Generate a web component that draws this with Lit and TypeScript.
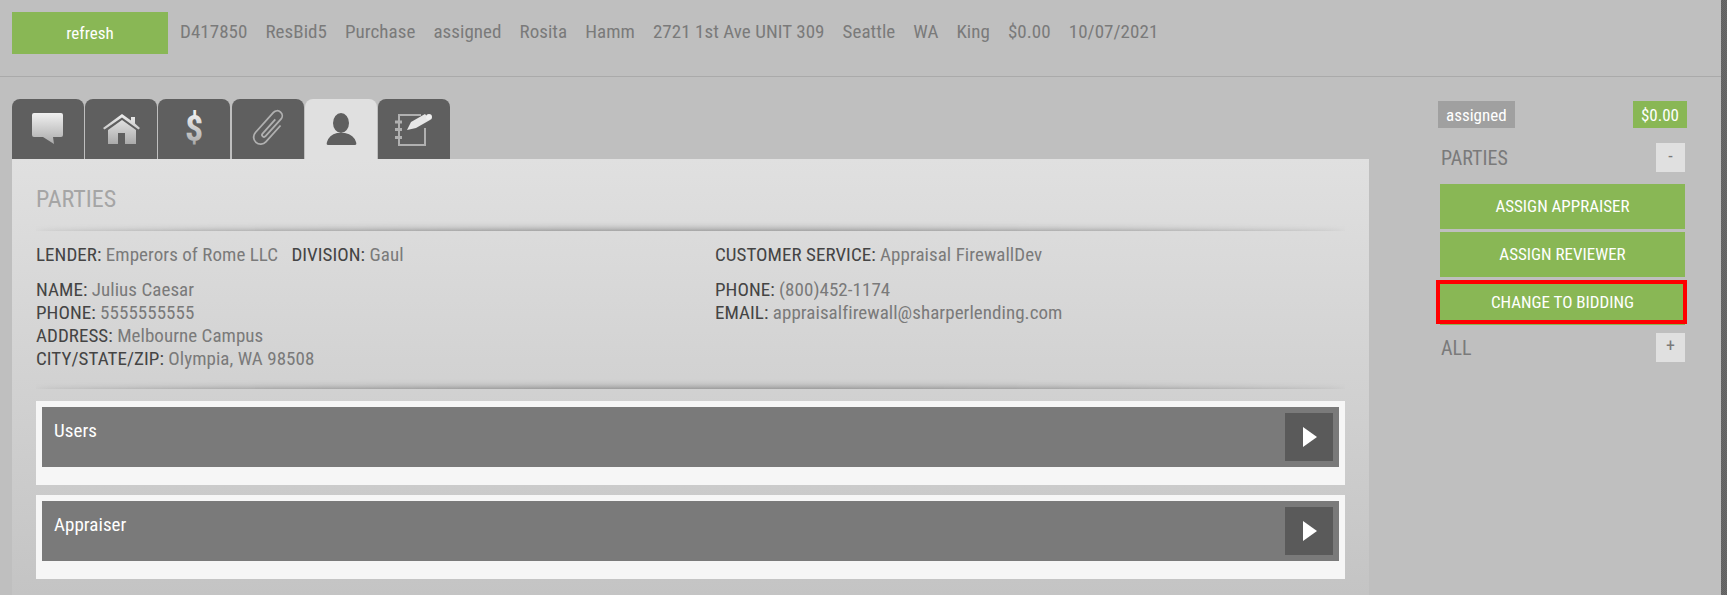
import { LitElement, html, css, svg } from 'lit';
import { customElement } from 'lit/decorators.js';

const tabIcons = [
  svg`<path d="M22 14h27q2 0 2 2v20q0 2-2 2h-8l1 7-11-7h-9q-2 0-2-2V16q0-2 2-2z" fill="url(#g)"/>`,
  svg`<path d="M18 29 37 15l9 6.500V18h4v6.500L55 29l-1.500 1.500L37 18.500 19.500 30.500z" fill="url(#g)"/><path d="M23 31 37 21l14 10v14H40V34h-7v11H23z" fill="url(#g)"/>`,
  svg`<text x="36" y="42" text-anchor="middle" font-family="Roboto Condensed, Roboto" font-stretch="condensed" font-weight="700" font-size="36" fill="url(#g)">$</text>`,
  svg`<path transform="rotate(42 36 30)" d="M43 19V41a7 7 0 0 1-14 0V14a5 5 0 0 1 10 0V37a2 2 0 0 1-4 0V18" fill="none" stroke="#b0b0b0" stroke-width="1.800"/>`,
  svg`<ellipse cx="36" cy="24" rx="8" ry="10" fill="#5f5f5f"/><path d="M23 46q-2 0-1-3 2-7 10-9h8q9 2 11 9 1 3-1 3z" fill="#5f5f5f"/>`,
  svg`<path d="M43 16H21v30h26V29" fill="none" stroke="#b0b0b0" stroke-width="2"/><path d="M17 21.500h7v3h-7zM17 29h7v3h-7zM17 37h7v3h-7z" fill="#b0b0b0"/><path d="M29 31l4-8 14-8 5 6-14 8z" fill="#e8e8e8"/><circle cx="51" cy="18" r="3" fill="#f0f0f0"/>`,
];

const topItems = ['D417850', 'ResBid5', 'Purchase', 'assigned', 'Rosita', 'Hamm', '2721 1st Ave UNIT 309', 'Seattle', 'WA', 'King', '$0.00', '10/07/2021'];

@customElement('app-root')
export default class AppRoot extends LitElement {
  static styles = css`
    :host {
      display: block;
      height: 595px;
      overflow: hidden;
      background: #bfbfbf;
      font-family: "Roboto Condensed", Roboto, "Liberation Sans", sans-serif;
      font-stretch: condensed;
      font-size: 19px;
      letter-spacing: 0.05px;
      color: #7a7a7a;
    }
    .page { display: flex; height: 595px; }
    .content { flex: 1; min-width: 0; }
    .strip { width: 6px; background: repeating-conic-gradient(#606060 0 25%, #6c6c6c 0 50%) 0 0 / 2px 2px; }
    .top {
      box-sizing: border-box;
      height: 77px;
      border-bottom: 1px solid #aaa;
      display: flex;
      gap: 18px;
      padding: 12px 0 0 12px;
      line-height: 40px;
    }
    .refresh {
      width: 156px;
      height: 42px;
      line-height: 42px;
      background: #89b755;
      color: #fff;
      text-align: center;
      font-size: 17px;
      letter-spacing: 0;
      margin-right: -6px;
    }
    .body { display: flex; }
    .main { width: 1357px; padding: 22px 0 0 12px; }
    .tabs { display: flex; gap: 1.2px; height: 60px; }
    .tab { width: 72px; height: 60px; border-radius: 8px 8px 0 0; background: #5f5f5f; }
    .tab.on { background: #e0e0e0; }
    .tab svg { display: block; width: 72px; height: 60px; }
    .panel {
      height: 436px;
      padding: 24px 24px 0;
      box-sizing: border-box;
      background: linear-gradient(#e0e0e0, #c4c4c4);
    }
    h2 { margin: 0; font-weight: 400; font-size: 24px; letter-spacing: 0; line-height: 32px; color: #a5a5a5; }
    .rule { position: relative; height: 16px; overflow: hidden; margin-bottom: 12px; }
    .rule.low { height: 19px; margin-bottom: 12px; }
    .rule::after {
      content: "";
      position: absolute;
      left: 0;
      right: 0;
      bottom: -12px;
      height: 12px;
      border-radius: 50%;
      box-shadow: 0 0 9px rgba(0, 0, 0, 0.5);
    }
    .cols { display: flex; line-height: 23px; }
    .col { flex: 0 0 679px; }
    .col p { margin: 0 0 12px; }
    .col p:last-child { margin: 0; }
    b { font-weight: 400; color: #444; }
    .acc { background: #f6f6f6; padding: 6px 6px 18px; margin-bottom: 10px; }
    .acc-in {
      height: 60px;
      background: #7a7a7a;
      display: flex;
      justify-content: space-between;
      color: #fff;
      padding: 6px;
      box-sizing: border-box;
    }
    .acc-in span { margin: 6px 0 0 6px; line-height: 23px; }
    .acc-b { width: 48px; height: 48px; background: #5a5a5a; display: flex; align-items: center; justify-content: center; }
    .acc-b svg { margin-left: 2px; }
    .side { margin-left: 69px; width: 249px; padding-top: 24px; letter-spacing: 0; }
    .badges { display: flex; justify-content: space-between; }
    .badge { color: #fff; background: #a0a0a0; height: 27px; line-height: 29px; padding: 0 8px; font-size: 17px; }
    .badge.g { background: #89b755; }
    .head { display: flex; justify-content: space-between; align-items: center; margin: 15px 2px 12px 3px; font-size: 20px; }
    .head.all { margin-top: 8px; }
    .pm { width: 29px; height: 29px; background: #e0e0e0; text-align: center; line-height: 25px; font-size: 18px; }
    .btn { position: relative; height: 45px; line-height: 45px; background: #89b755; color: #fff; text-align: center; font-size: 17px; margin: 0 2px 3px; }
    .mark { position: absolute; left: -4px; top: 0; width: 243px; height: 36px; border: 4px solid #f00; }
  `;

  render() {
    const arrow = html`<svg width="14" height="20" viewBox="0 0 14 20"><path d="M0 0 14 10 0 20z" fill="#fff"/></svg>`;
    return html`
      <div class="page">
        <div class="content">
          <div class="top">
            <div class="refresh">refresh</div>
            ${topItems.map(t => html`<span>${t}</span>`)}
          </div>
          <div class="body">
            <div class="main">
              <div class="tabs">
                ${tabIcons.map((ic, i) => html`
                  <div class="tab ${i === 4 ? 'on' : ''}">
                    <svg viewBox="0 0 72 60">
                      <defs><linearGradient id="g" gradientUnits="userSpaceOnUse" x1="0" y1="14" x2="0" y2="46"><stop offset="0" stop-color="#f0f0f0"/><stop offset="1" stop-color="#a8a8a8"/></linearGradient></defs>
                      ${ic}
                    </svg>
                  </div>`)}
              </div>
              <div class="panel">
                <h2>PARTIES</h2>
                <div class="rule"></div>
                <div class="cols">
                  <div class="col">
                    <p><b>LENDER:</b> Emperors of Rome LLC &nbsp; <b>DIVISION:</b> Gaul</p>
                    <p><b>NAME:</b> Julius Caesar<br><b>PHONE:</b> 5555555555<br><b>ADDRESS:</b> Melbourne Campus<br><b>CITY/STATE/ZIP:</b> Olympia, WA 98508</p>
                  </div>
                  <div class="col">
                    <p><b>CUSTOMER SERVICE:</b> Appraisal FirewallDev</p>
                    <p><b>PHONE:</b> (800)452-1174<br><b>EMAIL:</b> appraisalfirewall@sharperlending.com</p>
                  </div>
                </div>
                <div class="rule low"></div>
                <div class="acc"><div class="acc-in"><span>Users</span><div class="acc-b">${arrow}</div></div></div>
                <div class="acc"><div class="acc-in"><span>Appraiser</span><div class="acc-b">${arrow}</div></div></div>
              </div>
            </div>
            <div class="side">
              <div class="badges"><span class="badge">assigned</span><span class="badge g">$0.00</span></div>
              <div class="head"><span>PARTIES</span><span class="pm">-</span></div>
              <div class="btn">ASSIGN APPRAISER</div>
              <div class="btn">ASSIGN REVIEWER</div>
              <div class="btn">CHANGE TO BIDDING<div class="mark"></div></div>
              <div class="head all"><span>ALL</span><span class="pm">+</span></div>
            </div>
          </div>
        </div>
        <div class="strip"></div>
      </div>`;
  }
}
